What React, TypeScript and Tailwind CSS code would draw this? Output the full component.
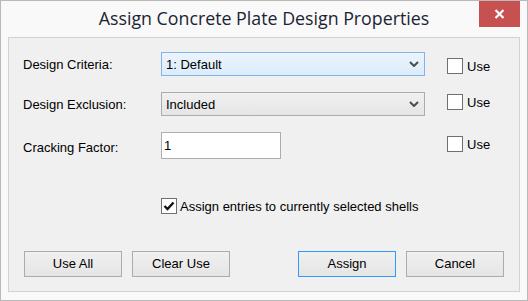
import React from 'react';

const font = { fontFamily: '"Liberation Sans", Arial, sans-serif' };

const Chevron = () => (
  <svg width="10" height="6" viewBox="0 0 10 6" className="shrink-0">
    <path d="M1 1 L5 5 L9 1" fill="none" stroke="#4d4d4d" strokeWidth="2" />
  </svg>
);

const UseBox = ({ offset }: { offset: string }) => (
  <div className={`flex items-center ml-[22px] self-start ${offset}`}>
    <div className="w-[16px] h-[16px] border border-[#707070] bg-white" />
    <span className="ml-[4px] text-[13px] text-black leading-[15px]">Use</span>
  </div>
);

const Button = ({ label, active }: { label: string; active?: boolean }) => (
  <button
    className={`w-[98px] h-[26px] text-[13px] text-black bg-gradient-to-b from-[#f0f0f0] to-[#e5e5e5] border ${
      active ? 'border-[#3399ff]' : 'border-[#acacac]'
    }`}
    style={font}
  >
    {label}
  </button>
);

export default function App() {
  return (
    <div
      className="w-[528px] h-[301px] border border-[#b9b9b9] bg-[#f9f9f9] flex flex-col"
      style={font}
    >
      <div className="relative h-[36px] flex items-start justify-center">
        <span
          className="mt-[6px] text-[17.8px] text-[#1b2433] leading-[22px]"
          style={{ fontFamily: '"Open Sans", "Noto Sans", sans-serif' }}
        >
          Assign Concrete Plate Design Properties
        </span>
        <div className="absolute right-[7px] top-0 w-[41px] h-[26px] bg-[#c75050] flex items-center justify-center">
          <svg width="11" height="10" viewBox="0 0 11 10">
            <path d="M1.5 1 L9.5 9 M9.5 1 L1.5 9" stroke="white" strokeWidth="2.2" />
          </svg>
        </div>
      </div>

      <div className="mx-[7px] h-[255px] border border-[#d2d2d2] bg-[#f0f0f0] flex flex-col pt-[14px] pl-[14px] pr-[15px] text-[13px] text-black">
        <div className="flex items-center h-[24px]">
          <span className="w-[138px] leading-[15px]">Design Criteria:</span>
          <div className="w-[264px] h-[24px] border border-[#7eb4ea] bg-gradient-to-b from-[#ecf4fc] to-[#dcecfc] flex items-center justify-between pl-[4px] pr-[5px]">
            <span className="leading-[15px]">1: Default</span>
            <Chevron />
          </div>
          <UseBox offset="mt-[6px]" />
        </div>

        <div className="flex items-center h-[24px] mt-[16px]">
          <span className="w-[138px] leading-[15px]">Design Exclusion:</span>
          <div className="w-[264px] h-[24px] border border-[#acacac] bg-gradient-to-b from-[#f0f0f0] to-[#e5e5e5] flex items-center justify-between pl-[4px] pr-[5px]">
            <span className="leading-[15px]">Included</span>
            <Chevron />
          </div>
          <UseBox offset="mt-[2px]" />
        </div>

        <div className="flex items-center h-[27px] mt-[16px]">
          <span className="w-[138px] leading-[15px] mt-[3px]">Cracking Factor:</span>
          <div className="w-[120px] h-[27px] border border-[#abadb3] bg-white pt-[3px] pl-[2px]">
            <span className="leading-[15px]">1</span>
          </div>
          <div className="w-[144px]" />
          <UseBox offset="mt-[4px]" />
        </div>

        <div className="flex items-center ml-[138px] mt-[39px] h-[16px]">
          <div className="w-[16px] h-[16px] border border-[#707070] bg-white flex items-center justify-center">
            <svg width="12" height="10" viewBox="0 0 12 10">
              <path d="M1.5 5 L4.5 8 L10.5 1.5" fill="none" stroke="#111" strokeWidth="2.4" />
            </svg>
          </div>
          <span className="ml-[3px] leading-[15px]">Assign entries to currently selected shells</span>
        </div>

        <div className="flex justify-between mt-[37px] pl-[1px]">
          <div className="flex gap-[10px]">
            <Button label="Use All" />
            <Button label="Clear Use" />
          </div>
          <div className="flex gap-[10px]">
            <Button label="Assign" active />
            <Button label="Cancel" />
          </div>
        </div>
      </div>
    </div>
  );
}
